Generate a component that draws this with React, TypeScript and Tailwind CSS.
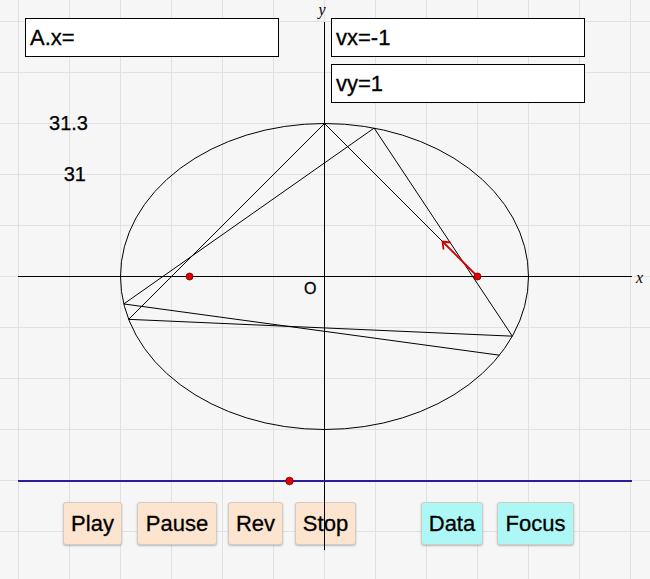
import React from "react";

const OX = 324.5;
const OY = 276.5;
const S = 51;

const px = (x: number) => OX + x * S;
const py = (y: number) => OY - y * S;

const pathPts: [number, number][] = [
  [3, 0],
  [0, 3],
  [-3.84, -0.84],
  [3.683, -1.17],
  [0.973, 2.91],
  [-3.936, -0.538],
  [3.431, -1.543],
];

function GridLayer() {
  const vx: number[] = [];
  for (let k = -6; k <= 7; k++) vx.push(OX + k * S);
  const hy: number[] = [];
  for (let k = -6; k <= 6; k++) hy.push(OY + k * S);
  return (
    <svg className="absolute inset-0" width={650} height={579}>
      {vx.map((x) => (
        <line key={"v" + x} x1={x} y1={0} x2={x} y2={579} stroke="#e1e1e1" strokeWidth={1} />
      ))}
      {hy.map((y) => (
        <line key={"h" + y} x1={0} y1={y} x2={650} y2={y} stroke="#e1e1e1" strokeWidth={1} />
      ))}
    </svg>
  );
}

function DrawingLayer() {
  const poly = pathPts.map(([x, y]) => `${px(x)},${py(y)}`).join(" ");
  const ax = px(3);
  const ay = py(0);
  const tx = ax - 35;
  const ty = ay - 35;
  return (
    <svg className="absolute inset-0 pointer-events-none" width={650} height={579}>
      {/* axes */}
      <line x1={18} y1={OY} x2={632} y2={OY} stroke="#000" strokeWidth={1} />
      <line x1={OX} y1={22} x2={OX} y2={550} stroke="#000" strokeWidth={1} />
      <text x={318.5} y={15} fontFamily="'Liberation Serif', serif" fontStyle="italic" fontSize={16} fill="#000">
        y
      </text>
      <text x={636} y={282.5} fontFamily="'Liberation Serif', serif" fontStyle="italic" fontSize={16} fill="#000">
        x
      </text>
      <text
        x={304}
        y={294}
        fontFamily="'Liberation Sans', Arial, sans-serif"
        fontSize={16}
        fill="#000"
        stroke="#000"
        strokeWidth={0.3}
      >
        O
      </text>
      {/* ellipse */}
      <ellipse cx={OX} cy={OY} rx={204} ry={153} fill="none" stroke="#000" strokeWidth={1} />
      {/* billiard path */}
      <polyline points={poly} fill="none" stroke="#000" strokeWidth={1} strokeLinejoin="round" />
      {/* velocity arrow */}
      <line x1={ax} y1={ay} x2={tx} y2={ty} stroke="#d40000" strokeWidth={1.8} />
      <polyline
        points={`${tx + 1},${ty + 8} ${tx},${ty} ${tx + 8},${ty + 1}`}
        fill="none"
        stroke="#d40000"
        strokeWidth={1.8}
      />
      {/* points */}
      <circle cx={px(-Math.sqrt(7))} cy={OY} r={3.5} fill="#e00000" stroke="#7a0000" strokeWidth={0.8} />
      <circle cx={ax} cy={ay} r={3.5} fill="#e00000" stroke="#7a0000" strokeWidth={0.8} />
      {/* slider line */}
      <line x1={18} y1={481} x2={632} y2={481} stroke="#2c1c9c" strokeWidth={2} />
      <circle cx={289.5} cy={481} r={3.8} fill="#e00000" stroke="#7a0000" strokeWidth={0.8} />
    </svg>
  );
}

function InputBox({ label, className }: { label: string; className: string }) {
  return (
    <div
      className={
        "absolute w-[254px] h-[39px] bg-white border border-black flex items-center pl-[4px] text-[22px] leading-none text-black [-webkit-text-stroke:0.3px_black] " +
        className
      }
    >
      {label}
    </div>
  );
}

function Btn({ label, w, tone }: { label: string; w: string; tone: "peach" | "cyan" }) {
  const bg = tone === "peach" ? "bg-[#fde4cf]" : "bg-[#aef7f7]";
  return (
    <div
      className={
        "h-[43px] flex items-center justify-center rounded-[3px] border border-[#d4ccc4] shadow-[0_1px_2px_rgba(0,0,0,0.25)] text-[22px] leading-none text-black [-webkit-text-stroke:0.3px_black] " +
        bg +
        " " +
        w
      }
    >
      {label}
    </div>
  );
}

export default function App() {
  return (
    <div
      className="relative w-[650px] h-[579px] overflow-hidden bg-[#f6f6f6]"
      style={{ fontFamily: "'Liberation Sans', Arial, Helvetica, sans-serif" }}
    >
      <GridLayer />

      <InputBox label="A.x=" className="left-[25px] top-[18px]" />
      <InputBox label="vx=-1" className="left-[331px] top-[18px]" />
      <InputBox label="vy=1" className="left-[331px] top-[64px]" />

      <div className="absolute left-[30px] top-[111px] w-[58px] flex flex-col items-end gap-[27px] text-[20px] leading-[24px] text-black [-webkit-text-stroke:0.25px_black]">
        <span>31.3</span>
        <span className="mr-[2px]">31</span>
      </div>

      <div className="absolute left-[63px] top-[502px] flex items-start">
        <Btn label="Play" w="w-[59px]" tone="peach" />
        <div className="ml-[15px]">
          <Btn label="Pause" w="w-[80px]" tone="peach" />
        </div>
        <div className="ml-[11px]">
          <Btn label="Rev" w="w-[55px]" tone="peach" />
        </div>
        <div className="ml-[12px]">
          <Btn label="Stop" w="w-[61px]" tone="peach" />
        </div>
        <div className="ml-[65px]">
          <Btn label="Data" w="w-[62px]" tone="cyan" />
        </div>
        <div className="ml-[14px]">
          <Btn label="Focus" w="w-[77px]" tone="cyan" />
        </div>
      </div>

      <DrawingLayer />
    </div>
  );
}
